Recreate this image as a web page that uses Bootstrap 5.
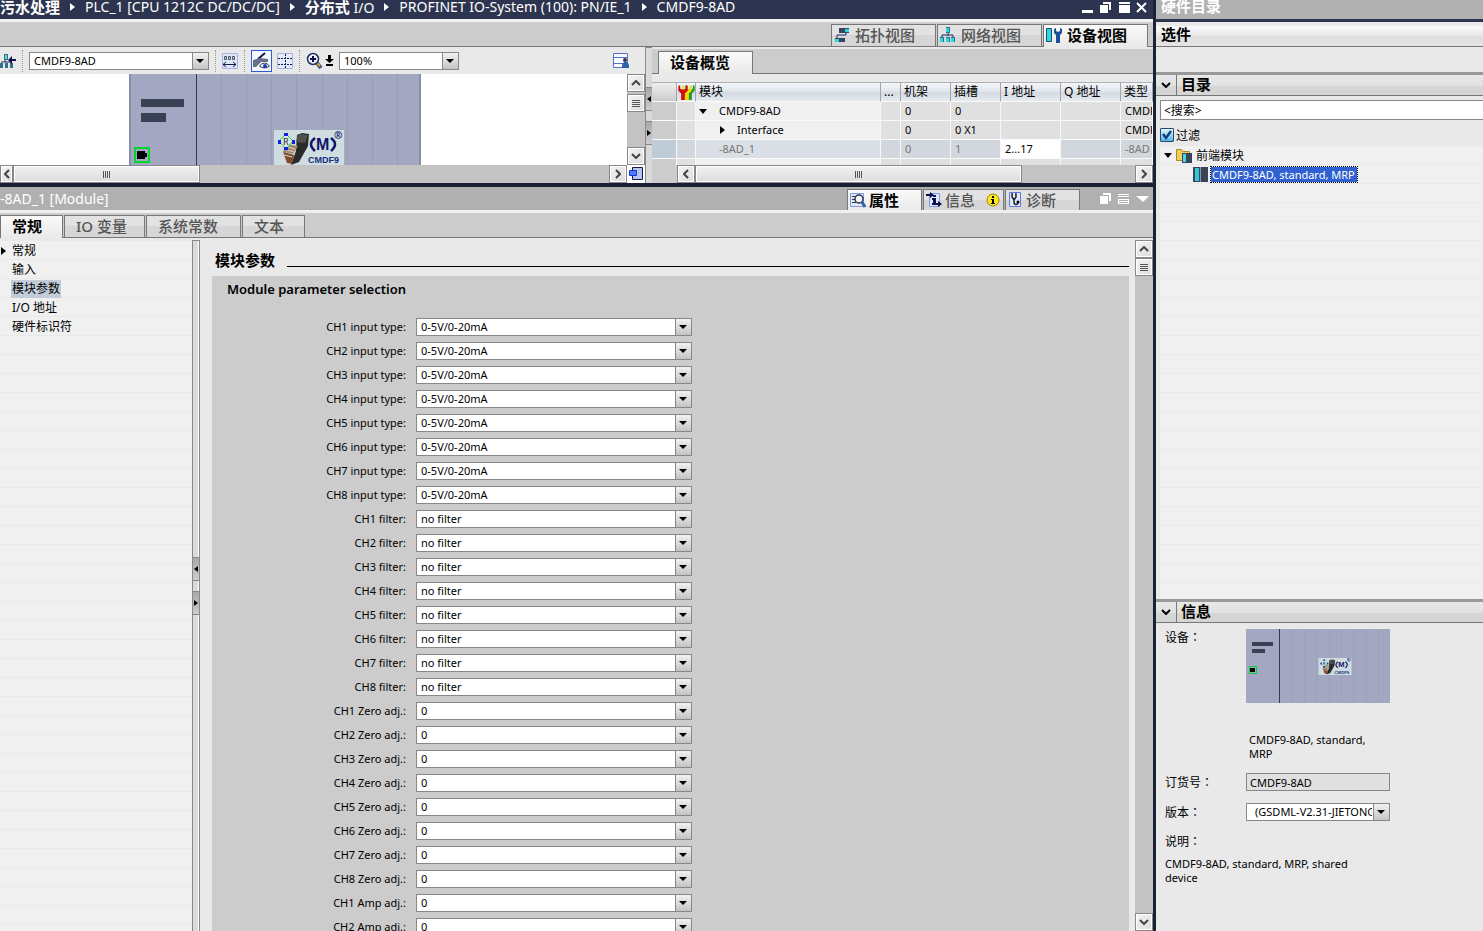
<!DOCTYPE html>
<html lang="zh-CN">
<head>
<meta charset="utf-8">
<meta name="viewport" content="width=device-width, initial-scale=1">
<title>CMDF9-8AD</title>
<link href="https://cdn.jsdelivr.net/npm/bootstrap@5.3.0/dist/css/bootstrap.min.css" rel="stylesheet">
<style>
  body { font: 11px/14px "Noto Sans", "Noto Sans CJK SC", sans-serif; color: #000; background: #e9e9e9; }
  svg { display: block; flex: none; }
  button, select, input { font: inherit; color: inherit; border-radius: 0; }
  button { background: none; border: 0; padding: 0; }
  a { color: inherit; text-decoration: none; }
  .cjk { font-size: 12px; line-height: 16px; }
  .big { font-size: 15px; line-height: 20px; font-weight: 700; }
  .grow-0 { min-width: 0; min-height: 0; }

  /* title bars */
  .topbar { height: 19px; flex: none; padding-bottom: 5px; background: #2d344f; color: #fff; font-size: 14px; font-weight: 400; }
  .topbar .cjk-run { font-weight: 700; font-size: 15px; }
  .topbar .tri-r { margin: 0 10px; }
  .tri-r { width: 0; height: 0; border: 4px solid transparent; border-left: 5px solid currentColor; border-right: 0; }
  .tri-d { width: 0; height: 0; border: 4px solid transparent; border-top: 5px solid currentColor; border-bottom: 0; }
  .tri-l { width: 0; height: 0; border: 4px solid transparent; border-right: 5px solid currentColor; border-left: 0; }

  /* tabs */
  .strip { background: #ccc; border-bottom: 1px solid #777; flex: none; }
  .strip-main { height: 28px; border-top: 3px solid #f0f0f0; padding-right: 5px; gap: 1px; }
  .vtab { height: 22px; border: 1px solid #777; border-bottom: 0; background: linear-gradient(#e2e2e2 50%, #d6d6d6 50%); color: #555; font-size: 15px; line-height: 18px; font-weight: 500; white-space: nowrap; }
  .vtab.on { background: linear-gradient(#fafafa, #e9e9e9); color: #000; font-weight: 700; margin-bottom: -1px; height: 23px; }
  .strip-main .vtab { width: 105px; padding: 0 0 2px 2px; }
  .strip-main .vtab svg { margin-right: 5px; }

  /* combo boxes */
  .combo { height: 18px; border: 1px solid #888; appearance: none; padding: 0 17px 0 4px; line-height: 16px; outline-offset: -1px;
    background: #fff url("data:image/svg+xml,%3Csvg xmlns='http://www.w3.org/2000/svg' width='16' height='16'%3E%3Cdefs%3E%3ClinearGradient id='g' x2='0' y2='1'%3E%3Cstop stop-color='%23f2f2f2'/%3E%3Cstop offset='1' stop-color='%23c4c4c4'/%3E%3C/linearGradient%3E%3C/defs%3E%3Cpath fill='url(%23g)' d='M0 0h16v16H0z'/%3E%3Cpath fill='%23888' d='M0 0h1v16H0z'/%3E%3Cpath d='M4 6h8L8 10z'/%3E%3C/svg%3E") no-repeat right 0 top 0; }

  /* scroll bars */
  .track { background: #c3c3c3; }
  .sbtn { width: 18px; height: 18px; flex: none; border: 1px solid #888; background: linear-gradient(135deg, #f4f4f4, #dcdcdc); box-shadow: inset 0 0 0 1px #fff; display: flex; align-items: center; justify-content: center; }
  .thumb { height: 18px; border: 1px solid #888; background: linear-gradient(#f2f2f2, #dcdcdc); box-shadow: inset 0 0 0 1px #fff; display: flex; align-items: center; justify-content: center; }
  .grip { width: 8px; height: 7px; background: repeating-linear-gradient(90deg, #555 0 1px, transparent 1px 2px); }
  .grip-v { width: 8px; height: 7px; background: repeating-linear-gradient(#555 0 1px, transparent 1px 2px); }

  /* splitters */
  .split { width: 7px; flex: none; border-left: 1px solid #888; border-top: 1px solid #888; background: #dadada; }
  .split .knob { height: 24px; flex: none; width: 100%; background: linear-gradient(#a8a8a8, #ccc); border-top: 1px solid #888; border-bottom: 1px solid #888; display: flex; align-items: center; justify-content: center; }
  .split-in { width: 8px; border-right: 1px solid #888; box-shadow: inset -1px 0 #fff; }
  .knob .tri-l, .knob .tri-r { border-top-width: 3px; border-bottom-width: 3px; }
  .knob .tri-l { border-right-width: 4px; } .knob .tri-r { border-left-width: 4px; }

  /* upper editor */
  .editor { height: 136px; flex: none; }
  .tools { height: 27px; gap: 5px; }
  .vdots { width: 1px; height: 22px; border-left: 1px dotted #999; flex: none; margin: 0 1px; }
  .leftpane { width: 645px; flex: none; }
  .canvas { background: #fff; }
  .press { border: 1px solid #2a5bd0; background: #f6f8ff; }
  .ov-strip { height: 25px; padding-left: 6px; }
  .ov-strip .vtab { width: 95px; padding: 0 0 2px 11px; text-align: left; }
  .grid-ov { width: 100%; table-layout: fixed; border-collapse: separate; border-spacing: 0; margin: 0; }
  .grid-ov th, .grid-ov td { height: 19px; padding: 0 0 0 3px; white-space: nowrap; overflow: hidden; border-right: 1px solid #f8f8f8; border-bottom: 1px solid #fafafa; background: #e0e0e0; line-height: 16px; vertical-align: middle; font-weight: 400; }
  .grid-ov td:nth-child(n+5) { padding-left: 4px; }
  .grid-ov th { background: linear-gradient(#f4f6f8, #dfe4ea 50%, #d2d9e1 51%, #e6eaef); border-right-color: #a5a5a5; border-top: 1px solid #b0b0b0; height: 20px; }
  .grid-ov th.corner { background: linear-gradient(#eee, #ccc); }
  .grid-ov td.rh { background: #ccc; }
  .grid-ov td.nm { background: #f0f0f0; }
  .grid-ov .lvl2 { padding-left: 21px; }
  .grid-ov tr.sel td { background: #d1d7dc; color: #777; }
  .grid-ov tr.sel td.rh { background: #c0cbd8; }
  .grid-ov tr.sel td.nm { background: #d9dfe4; }
  .grid-ov tr.sel td.edit { background: #fff; color: #000; }

  /* inspector */
  .insp { border-top: 4px solid #1a1f33; }
  .insp-title { height: 23px; flex: none; background: #b0b0b0; color: #fff; font-size: 14px; font-weight: 400; }
  .insp-title .vtab { height: 21px; padding-left: 2px; }
  .insp-title .vtab svg { margin-right: 3px; }
  .insp-tabs { height: 28px; border-top: 3px solid #f0f0f0; gap: 1px; }
  .insp-tabs .vtab { padding: 0 0 2px 11px; text-align: left; }
  .navtree { width: 192px; flex: none; margin-top: 3px; background: repeating-linear-gradient(#f0f0f0 0 18px, #e8e8e8 18px 19px); }
  .navtree a { height: 19px; padding-left: 12px; display: flex; align-items: center; position: relative; }
  .navtree .cur { background: #c3cdd9; box-shadow: -1px 0 #c3cdd9; padding-right: 1px; line-height: 18px; }
  .navtree .tri-r { position: absolute; left: 1px; top: 6px; }
  .rule { height: 1px; background: #000; flex: 1; }
  .content { padding: 0 6px 0 12px; }
  .params { background: #ccc; padding: 4px 0 0 15px; }
  .ptitle { font-size: 13px; line-height: 18px; font-weight: 600; margin: 0 0 17px; }
  .prow { height: 24px; display: flex; align-items: center; }
  .prow label { width: 179px; text-align: right; margin-right: 10px; flex: none; }
  .prow .combo { width: 276px; }

  /* catalogue */
  .side { width: 330px; border-left: 3px solid #1c2236; }
  .side-cap { height: 22px; flex: none; padding: 0 0 7px 5px; background: #b1b1b1; border-bottom: 3px solid #2d344f; color: #fff; }
  .opts { height: 21px; flex: none; margin-top: 4px; padding: 0 0 4px 5px; background: linear-gradient(#fbfbfb, #e6e6e6 50%, #dedede 51%, #e4e4e4); border-bottom: 1px solid #777; }
  .gapbar { height: 25px; flex: none; }
  .sechead { height: 24px; flex: none; line-height: 19px; border-top: 3px solid #999; border-bottom: 1px solid #777; background: linear-gradient(#e8e8e8, #e0e0e0 55%, #d5d5d5 56%); }
  .sechead button { width: 21px; border-right: 1px solid #777; }
  .search { height: 20px; border: 1px solid #888; border-right: 0; margin: 4px 0 8px 4px; padding: 0 3px; width: calc(100% - 4px); }
  .search::placeholder { color: #000; opacity: 1; }
  .filter { height: 18px; margin-left: 4px; flex: none; }
  .tick { appearance: none; width: 14px; height: 14px; margin: 0 2px 0 0; border: 1px solid #1c4f78; border-radius: 1px;
    background: url("data:image/svg+xml,%3Csvg xmlns='http://www.w3.org/2000/svg' width='12' height='12'%3E%3Cpath d='M2 5l3 4 5-7' fill='none' stroke='%23123c86' stroke-width='2.4'/%3E%3C/svg%3E"), linear-gradient(#e6f4fb, #55b8e4); }
  .cat { margin-left: 4px; background: repeating-linear-gradient(#f0f0f0 0 18px, #eaeaea 18px 19px); }
  .cat .rowline { height: 19px; }
  .cat .lvl1 { padding-left: 33px; }
  .picked { background: #2f62d0; color: #fff; outline: 1px dotted #000; line-height: 15px; padding: 0 1px; width: 146px; overflow: hidden; white-space: nowrap; }
  .info { height: 308px; flex: none; padding: 6px 0 0 9px; }
  .info .lbl { width: 81px; flex: none; }
  .tc { font-family: "Noto Sans CJK TC", sans-serif; }
  .field { width: 144px; }
  .ro { height: 18px; border: 1px solid #888; background: #e0e0e0; padding: 0 3px; }
</style>
</head>
<body>
<svg class="d-none" aria-hidden="true">
  <symbol id="cmd" viewBox="0 0 70 36">
    <path fill="#cfdde0" d="M0 0h70v36H0z"/>
    <path fill="#2a2a28" d="M23 5l5-2 7 1-1 12-9 16-8 3 5-14z"/>
    <path fill="#50504c" d="M24 4l10 1-3 8-9-1z"/>
    <path fill="#a0896c" d="M12 14l12 2-5 8-10-2z"/>
    <path fill="#7d4c30" d="M9 22l11 3-2 9-5-1z"/>
    <path d="M11 16l10 3M10 19l10 3M10 25l8 2" stroke="#e0d2b8" fill="none"/>
    <path d="M12 4l7 7-7 8-7-8z" fill="#dce9e6" stroke="#22cc44"/>
    <path fill="#1020e8" d="M10 3h4v3h-4zM4 10h3v4H4zM18 10h3v4h-3zM10 17h4v3h-4z"/>
    <text x="9" y="15" font-size="9" fill="#222">R</text>
    <path d="M41 8q-8 6 0 13M57 8q8 6 0 13" fill="none" stroke="#10146a" stroke-width="2.500"/>
    <text x="42" y="20" font-size="16" font-weight="700" font-family="Liberation Sans" fill="#10146a">M</text>
    <text x="60" y="9" font-size="10" font-weight="700" fill="#10146a">®</text>
    <text x="34" y="33" font-size="9" font-weight="700" font-family="Liberation Sans" fill="#14307c">CMDF9</text>
  </symbol>
  <symbol id="up" viewBox="0 0 10 6"><path d="M1 5l4-4 4 4" fill="none" stroke="#444" stroke-width="2"/></symbol>
  <symbol id="dn" viewBox="0 0 10 6"><path d="M1 1l4 4 4-4" fill="none" stroke="#444" stroke-width="2"/></symbol>
  <symbol id="fold" viewBox="0 0 10 6"><path d="M1 1l4 4 4-4" fill="none" stroke="#000" stroke-width="2"/></symbol>
  <symbol id="lt" viewBox="0 0 6 10"><path d="M5 1L1 5l4 4" fill="none" stroke="#444" stroke-width="2"/></symbol>
  <symbol id="rt" viewBox="0 0 6 10"><path d="M1 1l4 4-4 4" fill="none" stroke="#444" stroke-width="2"/></symbol>
  <symbol id="wrench" viewBox="0 0 10 16"><path d="M0 1l2-1v4l3 1 3-1V0l2 1v5L7 9v7H3V9L0 6z"/></symbol>
</svg>

<div class="d-flex vh-100 overflow-hidden">
  <main class="d-flex flex-column flex-grow-1 grow-0 overflow-hidden">
    <header class="topbar d-flex align-items-center text-nowrap">
      <span class="cjk-run">污水处理</span><i class="tri-r"></i>
      <span>PLC_1 [CPU 1212C DC/DC/DC]</span><i class="tri-r"></i>
      <span><span class="cjk-run">分布式</span> I/O</span><i class="tri-r"></i>
      <span>PROFINET IO-System (100): PN/IE_1</span><i class="tri-r"></i>
      <span>CMDF9-8AD</span>
      <svg class="ms-auto me-1" width="68" height="13" fill="#fff"><path d="M1 9h11v3H1z"/><path d="M19 4h8v8h-8z"/><path d="M22 1h8v8h-2V3h-6z"/><path d="M38 1h11v2H38zM38 4h11v8H38z"/><path d="M56 2l9 9M65 2l-9 9" stroke="#fff" stroke-width="2"/></svg>
    </header>

    <div class="strip strip-main d-flex justify-content-end align-items-end" role="tablist">
      <button class="vtab d-flex align-items-center" role="tab">
        <svg width="16" height="16"><path d="M3 12V8h9V5" fill="none" stroke="#1a2a6c"/><path fill="#34465c" d="M5 1h10v5H5zM1 11h10v4H1z"/><path fill="#2cd8e0" d="M11 2h4v3h-4zM1 12h4v3H1z"/></svg>拓扑视图</button>
      <button class="vtab d-flex align-items-center" role="tab">
        <svg width="16" height="16"><path d="M8 4v5M2 11V8h11v3" fill="none" stroke="#1a2a6c"/><path fill="#34708c" d="M6 0h4v6H6zM0 10h4v5H0zM6 10h4v5H6zM11 10h4v5h-4z"/><path fill="#2cd8e0" d="M6 1h3v4H6zM0 11h3v4H0zM6 11h3v4H6zM11 11h3v4h-3z"/></svg>网络视图</button>
      <button class="vtab on d-flex align-items-center" role="tab" aria-selected="true">
        <svg width="16" height="16"><path fill="#2cd8e0" stroke="#14506c" d="M.5 1.500h5v13h-5z"/><g fill="#1f4f98" transform="translate(8 1)"><path d="M0 1l2-1v3l2 1 2-1V0l2 1v4L6 7v8H2V7L0 5z"/></g></svg>设备视图</button>
    </div>

    <section class="editor d-flex">
      <div class="leftpane d-flex flex-column">
        <div class="tools d-flex align-items-center">
          <svg width="16" height="16"><path d="M5 1v8M1 9h11" stroke="#1a2a5c"/><path fill="#34708c" d="M4 1h4v6H4zM0 10h3v5H0zM5 10h3v5H5zM10 10h3v5h-3z"/><path fill="#62d8d8" d="M5 2h2v4H5z"/><path d="M16 7h-5" stroke="#10104c" stroke-width="2"/><path fill="#10104c" d="M8 7l4-4v8z"/></svg>
          <i class="vdots"></i>
          <select class="combo" style="width:180px" aria-label="设备"><option>CMDF9-8AD</option></select>
          <i class="vdots"></i>
          <button aria-label="宽度"><svg width="16" height="16"><path fill="#dfe6f8" stroke="#a4b4e0" d="M.5.5h15v15H.5z"/><path fill="#8fe0e8" stroke="#556" d="M2.500 3.500h2v3h-2zM6.500 3.500h2v3h-2zM10.500 3.500h2v3h-2z"/><path d="M1 11.500h13M4 9l-3 2.500L4 14M11 9l3 2.500-3 2.500" fill="none" stroke="#111a4c"/></svg></button>
          <i class="vdots"></i>
          <button class="press" aria-label="标签"><svg width="19" height="20"><path d="M6 8l7-6" stroke="#111a4c" stroke-width="2"/><path fill="#667088" d="M1 9l7-2 8 1v3H9l-5 5H1z"/><path fill="#fff" stroke="#334" d="M7.500 15q5-6 10 0-5 4-10 0z"/><circle cx="13" cy="15" r="2" fill="#1638c8"/></svg></button>
          <button aria-label="网格"><svg width="16" height="16"><path fill="#e6ecfa" stroke="#a4b4e0" d="M.5.5h15v15H.5z"/><path d="M8.500 1v14M1 5.500h14M1 11.500h14" stroke="#111a4c" stroke-dasharray="2 1"/></svg></button>
          <i class="vdots"></i>
          <div class="d-flex align-items-center" style="gap:2px">
            <button aria-label="放大"><svg width="17" height="18"><path d="M11 11l4 5" stroke="#4a5a88" stroke-width="4"/><path d="M11 11l3 3" stroke="#d8a830" stroke-width="2"/><circle cx="7" cy="7" r="5.500" fill="#eef2ff" stroke="#223058" stroke-width="1.500"/><path d="M7 4v6M4 7h6" stroke="#10104c" stroke-width="2"/></svg></button>
            <svg width="9" height="12"><path d="M3 0h3v4h3L4.500 8 0 4h3zM1 9h7v2H1z"/></svg>
          </div>
          <select class="combo" style="width:120px" aria-label="缩放"><option>100%</option></select>
          <button class="ms-auto me-3" aria-label="用户视图"><svg width="16" height="16"><path fill="#f8faff" stroke="#5470c8" d="M.5.5h14v14H.5z"/><path fill="#5470c8" d="M0 4h14v1H0zM0 10h14v1H0z"/><circle cx="12" cy="7" r="2" fill="#334"/><path fill="#2c62a8" d="M9 15v-3l2-3h3l2 3v3z"/></svg></button>
        </div>
        <div class="canvas d-flex flex-grow-1 grow-0">
          <div class="flex-grow-1 overflow-hidden">
            <svg width="421" height="91">
              <path fill="#a3a7c1" d="M129 0h292v91H129z"/><path fill="#8890a8" d="M129 0h2v91h-2zM419 0h2v91h-2z"/>
              <path fill="#303a50" d="M196 0h1v91h-1z"/>
              <path fill="#989fac" d="M221 0h1v91h-1zM246 0h1v91h-1zM271 0h1v91h-1zM296 0h1v91h-1zM322 0h1v91h-1zM347 0h1v91h-1zM372 0h1v91h-1zM397 0h1v91h-1z"/>
              <path fill="#384254" d="M141 25h43v8h-43zM141 39h25v9h-25z"/>
              <path d="M135 74h14v14h-14z" fill="none" stroke="#00d830" stroke-width="2"/><path d="M137 77h8v2h2v4h-2v2h-8z"/>
              <use href="#cmd" x="274" y="56" width="70" height="36"/>
            </svg>
          </div>
          <div class="track d-flex flex-column">
            <button class="sbtn" aria-label="上"><svg width="10" height="6"><use href="#up"/></svg></button>
            <div class="sbtn" style="margin-top:2px"><i class="grip-v"></i></div>
            <button class="sbtn mt-auto" aria-label="下"><svg width="10" height="6"><use href="#dn"/></svg></button>
          </div>
        </div>
        <div class="track d-flex">
          <button class="sbtn" style="width:13px" aria-label="左"><svg width="6" height="10"><use href="#lt"/></svg></button>
          <div class="thumb" style="width:187px"><i class="grip"></i></div>
          <button class="sbtn ms-auto" aria-label="右"><svg width="6" height="10"><use href="#rt"/></svg></button>
          <svg width="18" height="18"><path fill="#fff" d="M0 0h18v18H0z"/><path fill="#b8c4ec" stroke="#111a4c" d="M5.500 2.500h10v12h-10z"/><path fill="#5478f8" stroke="#1438d8" d="M2.500 5.500h7v5h-7z"/></svg>
        </div>
      </div>
      <div class="split d-flex flex-column"><div class="knob" style="margin-top:39px"><i class="tri-l"></i></div><div class="knob" style="margin-top:10px"><i class="tri-r"></i></div></div>
      <div class="flex-grow-1 grow-0 d-flex flex-column" style="padding-top:2px">
        <div class="strip ov-strip d-flex align-items-end"><button class="vtab on" role="tab">设备概览</button></div>
        <div class="flex-grow-1 grow-0 overflow-hidden pt-2">
          <table class="grid-ov">
            <colgroup><col style="width:25px"><col style="width:19px"><col style="width:185px"><col style="width:20px"><col style="width:50px"><col style="width:50px"><col style="width:60px"><col style="width:60px"><col></colgroup>
            <thead class="cjk"><tr><th class="corner"></th><th class="p-0"><svg width="18" height="17"><use href="#wrench" x="8" y="1" width="10" height="15" fill="#1a9c28"/><use href="#wrench" x="5" y="1" width="10" height="15" fill="#f0d800"/><use href="#wrench" x="1" y="1" width="10" height="15" fill="#d01010"/></svg></th><th>模块</th><th>...</th><th>机架</th><th>插槽</th><th>I 地址</th><th>Q 地址</th><th>类型</th></tr></thead>
            <tbody>
              <tr><td class="rh"></td><td></td><td class="nm"><div class="d-flex align-items-center"><i class="tri-d me-2"></i><span class="ps-1">CMDF9-8AD</span></div></td><td></td><td>0</td><td>0</td><td></td><td></td><td>CMDF9-8AD</td></tr>
              <tr><td class="rh"></td><td></td><td class="nm"><div class="d-flex align-items-center lvl2"><i class="tri-r me-2"></i><span class="ps-1">Interface</span></div></td><td></td><td>0</td><td>0 X1</td><td></td><td></td><td>CMDF9-8AD</td></tr>
              <tr class="sel"><td class="rh"></td><td></td><td class="nm"><div class="ps-3 ms-1">-8AD_1</div></td><td></td><td>0</td><td>1</td><td class="edit">2...17</td><td></td><td>-8AD</td></tr>
              <tr><td class="rh"></td><td></td><td class="nm"></td><td></td><td></td><td></td><td></td><td></td><td></td></tr>
            </tbody>
          </table>
        </div>
        <div class="d-flex"><div style="width:25px;background:#ccc"></div>
          <div class="track d-flex flex-grow-1">
            <button class="sbtn" aria-label="左"><svg width="6" height="10"><use href="#lt"/></svg></button>
            <div class="thumb" style="width:327px"><i class="grip"></i></div>
            <button class="sbtn ms-auto" aria-label="右"><svg width="6" height="10"><use href="#rt"/></svg></button>
          </div>
        </div>
      </div>
    </section>

    <section class="insp d-flex flex-column flex-grow-1 grow-0">
      <div class="insp-title d-flex align-items-center">
        <span>-8AD_1 [Module]</span>
        <div class="d-flex align-items-end ms-auto align-self-end" style="gap:1px">
          <button class="vtab on d-flex align-items-center mb-0" style="width:75px" role="tab" aria-selected="true"><svg width="16" height="17"><path fill="#e0e8fc" stroke="#8098e0" d="M.5 1.500h13v13H.5z"/><path d="M2 4.500h4M2 7.500h3M2 10.500h4" stroke="#333"/><circle cx="9" cy="7" r="4" fill="#f4f8ff" stroke="#334" stroke-width="1.500"/><path d="M12 10l3 5" stroke="#345ca8" stroke-width="3"/></svg>属性</button>
          <button class="vtab d-flex align-items-center" style="width:81px" role="tab"><svg width="16" height="16"><path fill="#e0e8fc" stroke="#8098e0" d="M3.500 1.500h10v13h-10z"/><path d="M0 3h6M10 12h4" stroke="#10104c" stroke-width="2"/><path fill="#10104c" d="M4 0l4 3-4 3zM12 9l4 3-4 3zM7 3h3v2H7zM6 6h4v5h1v2H6v-2h1V8H6z"/></svg>信息<svg width="14" height="14" class="ms-auto"><circle cx="7" cy="7" r="6" fill="#ffe818" stroke="#a08000"/><path d="M6 3h2v2H6zM5 6h3v4h1v1H5v-1h1V7H5z"/></svg></button>
          <button class="vtab d-flex align-items-center" style="width:75px" role="tab"><svg width="14" height="16" class="me-1"><path fill="#e0e8fc" stroke="#6078e0" d="M1.500.5h11v14h-11z"/><path d="M5 2H4v3l2 3 2-3V2H7M6 8v3q2 3 4 0" fill="none" stroke="#222" stroke-width="1.500"/><circle cx="10" cy="10" r="1.500"/></svg>诊断</button>
        </div>
        <svg class="ms-3 me-1" width="53" height="14" fill="#fff"><path d="M4 4h8v8H4zM7 1h8v8h-2V3H7z"/><path d="M22 2h11v1H22zM22 4h11v1H22zM22 7h11v5H22zM23 8v1h9V8zM23 10v1h9v-1z" fill-rule="evenodd"/><path d="M40 4h13l-6 6z"/></svg>
      </div>
      <div class="strip insp-tabs d-flex align-items-end" role="tablist">
        <button class="vtab on" style="width:63px" role="tab" aria-selected="true">常规</button>
        <button class="vtab" style="width:81px" role="tab">IO 变量</button>
        <button class="vtab" style="width:95px" role="tab">系统常数</button>
        <button class="vtab" style="width:63px" role="tab">文本</button>
      </div>
      <div class="d-flex flex-grow-1 grow-0">
        <nav class="navtree cjk">
          <a href="#"><i class="tri-r"></i>常规</a><a href="#">输入</a><a href="#"><span class="cur">模块参数</span></a><a href="#">I/O 地址</a><a href="#">硬件标识符</a>
        </nav>
        <div class="split split-in d-flex flex-column" style="margin-top:2px"><div class="knob" style="margin-top:316px"><i class="tri-l"></i></div><div class="knob" style="margin-top:10px"><i class="tri-r"></i></div></div>
        <div class="flex-grow-1 grow-0 overflow-hidden content">
          <div class="d-flex align-items-center" style="padding:12px 0 6px 3px"><h2 class="big m-0 me-2">模块参数</h2><div class="rule ms-1" style="margin-top:12px"></div></div>
          <form class="params" id="params"><h3 class="ptitle">Module parameter selection</h3></form>
        </div>
        <div class="track d-flex flex-column" style="margin-top:2px">
          <button class="sbtn" aria-label="上"><svg width="10" height="6"><use href="#up"/></svg></button>
          <div class="sbtn"><i class="grip-v"></i></div>
          <button class="sbtn mt-auto" aria-label="下"><svg width="10" height="6"><use href="#dn"/></svg></button>
        </div>
      </div>
    </section>
  </main>

  <aside class="side flex-shrink-0 d-flex flex-column">
    <div class="side-cap big d-flex align-items-center">硬件目录</div>
    <div class="opts big d-flex align-items-center">选件</div>
    <div class="gapbar"></div>
    <div class="sechead big d-flex"><button class="d-flex align-items-center justify-content-center me-1" aria-label="折叠"><svg width="10" height="6"><use href="#fold"/></svg></button>目录</div>
    <input class="search cjk flex-shrink-0" type="text" placeholder="&lt;搜索&gt;" aria-label="搜索">
    <div class="filter d-flex align-items-start cjk"><input class="tick" type="checkbox" id="flt" checked><label for="flt">过滤</label></div>
    <div class="cat flex-grow-1 grow-0">
      <div class="rowline cjk d-flex align-items-center ps-1"><i class="tri-d me-1"></i>
        <svg width="16" height="16" class="me-1"><path fill="#f4cc60" stroke="#b08820" d="M.5 1.500h5l1 2h7v9H.5z"/><path fill="#3a4458" d="M6 5h10v10H6z"/><path fill="#40d8e0" d="M7 6h3v8H7z"/></svg>前端模块</div>
      <div class="rowline lvl1 d-flex align-items-center"><svg width="15" height="15" style="margin-right:3px"><path fill="#3a4458" d="M0 0h15v15H0z"/><path fill="#30c8d4" d="M2 1h4v13H2z"/><path fill="#8a94a4" d="M7 0h1v15H7z"/></svg><a href="#" class="picked">CMDF9-8AD, standard, MRP</a></div>
    </div>
    <div class="sechead big d-flex"><button class="d-flex align-items-center justify-content-center me-1" aria-label="折叠"><svg width="10" height="6"><use href="#fold"/></svg></button>信息</div>
    <div class="info">
      <div class="d-flex"><div class="lbl cjk">设备<span class="tc" lang="zh-TW">：</span></div>
        <div class="field"><svg width="144" height="74"><path fill="#a3a7c1" d="M0 0h144v74H0z"/><path fill="#303a50" d="M33 0h1v74h-1z"/><path fill="#989fac" d="M45 0h1v74h-1zM58 0h1v74h-1zM70 0h1v74h-1zM83 0h1v74h-1zM95 0h1v74h-1zM107 0h1v74h-1zM120 0h1v74h-1zM132 0h1v74h-1z" opacity=".5"/><path fill="#384254" d="M6 13h21v4H6zM6 20h13v4H6z"/><path fill="none" stroke="#00d830" d="M3.500 37.500h7v7h-7z"/><path d="M4 39h5v4H4z"/><use href="#cmd" x="72" y="29" width="34" height="17"/></svg></div></div>
      <div class="field" style="margin:30px 0 0 81px;padding:0 3px">CMDF9-8AD, standard, MRP</div>
      <div class="d-flex align-items-center" style="margin-top:12px"><label class="lbl cjk" for="ord">订货号<span class="tc" lang="zh-TW">：</span></label><input id="ord" class="field ro" readonly value="CMDF9-8AD"></div>
      <div class="d-flex align-items-center" style="margin-top:12px"><label class="lbl cjk" for="ver">版本<span class="tc" lang="zh-TW">：</span></label><select id="ver" class="field combo ps-2"><option>(GSDML-V2.31-JIETONG-CMDF9)</option></select></div>
      <div class="cjk" style="margin-top:12px">说明<span class="tc" lang="zh-TW">：</span></div>
      <div style="margin-top:7px;width:200px">CMDF9-8AD, standard, MRP, shared device</div>
    </div>
  </aside>
</div>

<script>
  const rows = [];
  for (const [name, value, count] of [['input type', '0-5V/0-20mA', 8], ['filter', 'no filter', 8], ['Zero adj.', '0', 8], ['Amp adj.', '0', 2]])
    for (let i = 1; i <= count; i++) rows.push([`CH${i} ${name}:`, value]);
  document.getElementById('params').insertAdjacentHTML('beforeend', rows.map(([l, v], i) =>
    `<div class="prow"><label for="p${i}">${l}</label><select class="combo" id="p${i}"><option>${v}</option></select></div>`).join(''));
</script>
<script src="https://cdn.jsdelivr.net/npm/bootstrap@5.3.0/dist/js/bootstrap.bundle.min.js"></script>
</body>
</html>
